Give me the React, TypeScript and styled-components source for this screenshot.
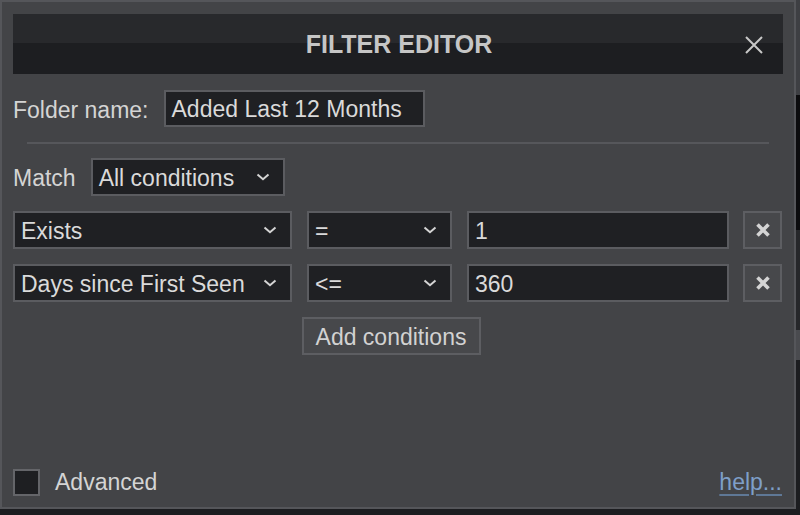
import React from "react";
import styled, { createGlobalStyle } from "styled-components";

const GlobalStyle = createGlobalStyle`
    html, body {
        margin: 0;
        padding: 0;
        width: 800px;
        height: 515px;
        overflow: hidden;
        background: linear-gradient(to bottom,
            #3e3f43 0 95px,
            #0c0c0e 95px 230px,
            #26272a 230px 330px,
            #4a4b4f 330px 360px,
            #1c1d20 360px);
        font-family: "Liberation Sans", Arial, sans-serif;
    }
`;

const Dialog = styled.div`
    box-sizing: border-box;
    width: 796px;
    height: 509px;
    background: #434447;
    border: 2px solid #55565a;
    padding: 12px 11px 11px 11px;
    display: flex;
    flex-direction: column;
    color: #d4d4d4;
    font-size: 23px;
`;

const Header = styled.div`
    height: 60px;
    flex: none;
    display: flex;
    align-items: center;
    justify-content: center;
    position: relative;
    background: linear-gradient(to bottom, #28292c 0 48%, #1d1e21 48% 100%);
`;

const Title = styled.h1`
    margin: 0 0 0 2px;
    font-size: 25px;
    font-weight: bold;
    color: #c6c6c6;
`;

const CloseButton = styled.button`
    position: absolute;
    right: 18px;
    top: 20px;
    width: 22px;
    height: 22px;
    padding: 0;
    border: none;
    background: transparent;
    display: flex;
    align-items: center;
    justify-content: center;
`;

const Row = styled.div<{ $top: number }>`
    display: flex;
    align-items: center;
    margin-top: ${(p) => p.$top}px;
    gap: 15px;
    flex: none;
`;

const Label = styled.span`
    color: #d4d4d4;
    font-size: 23px;
    padding-top: 3px;
    white-space: nowrap;
`;

const TextField = styled.div<{ $width: number; $height?: number }>`
    box-sizing: border-box;
    width: ${(p) => p.$width}px;
    height: ${(p) => p.$height ?? 38}px;
    background: #1f2023;
    border: 2px solid #5b5c60;
    padding: 2px 6px 0 6px;
    display: flex;
    align-items: center;
    color: #dadada;
    font-size: 23px;
    white-space: nowrap;
`;

const Select = styled(TextField)`
    justify-content: space-between;
    padding-right: 13px;
`;

const Divider = styled.hr`
    margin: 15px 14px 0 14px;
    border: none;
    height: 2px;
    background: #56575b;
    flex: none;
`;

const ConditionRow = styled.div`
    display: flex;
    align-items: center;
    margin-top: 15px;
    flex: none;
`;

const DeleteButton = styled.button`
    box-sizing: border-box;
    width: 39px;
    height: 38px;
    margin-left: 14px;
    background: #47484b;
    border: 2px solid #5d5e62;
    padding: 0;
    display: flex;
    align-items: center;
    justify-content: center;
`;

const AddRow = styled.div`
    display: flex;
    justify-content: center;
    margin-top: 15px;
    flex: none;
`;

const AddButton = styled.button`
    box-sizing: border-box;
    width: 179px;
    height: 38px;
    margin-left: -14px;
    background: #47484b;
    border: 2px solid #5d5e62;
    color: #d2d2d2;
    font-family: "Liberation Sans", Arial, sans-serif;
    font-size: 23px;
    padding: 2px 0 0 0;
`;

const Footer = styled.div`
    margin-top: auto;
    display: flex;
    align-items: center;
    justify-content: space-between;
    padding-right: 1px;
`;

const CheckLabel = styled.label`
    display: flex;
    align-items: center;
    gap: 15px;
    font-size: 23px;
    color: #d4d4d4;
`;

const CheckBox = styled.span`
    box-sizing: border-box;
    width: 27px;
    height: 27px;
    background: #1e1f22;
    border: 2px solid #646569;
    display: inline-block;
`;

const HelpLink = styled.a`
    color: #7e9fc8;
    font-size: 23px;
    text-decoration: underline;
    text-decoration-color: #5f7896;
    text-underline-offset: 4px;
`;

const Chevron = () => (
    <svg width="14" height="8" viewBox="0 0 14 8" style={{ marginTop: -2 }}>
        <path d="M1.5 1.5 L7 6.2 L12.5 1.5" fill="none" stroke="#d4d4d4" strokeWidth="2" />
    </svg>
);

const conditions = [
    { field: "Exists", op: "=", value: "1" },
    { field: "Days since First Seen", op: "<=", value: "360" },
];

export default function App() {
    return (
        <>
            <GlobalStyle />
            <Dialog>
                <Header>
                    <Title>FILTER EDITOR</Title>
                    <CloseButton aria-label="close">
                        <svg width="20" height="20" viewBox="0 0 20 20">
                            <path d="M2 2 L18 18 M18 2 L2 18" stroke="#c8c8c8" strokeWidth="2" />
                        </svg>
                    </CloseButton>
                </Header>

                <Row $top={16}>
                    <Label>Folder name:</Label>
                    <TextField $width={261} $height={37}>Added Last 12 Months</TextField>
                </Row>

                <Divider />

                <Row $top={14}>
                    <Label>Match</Label>
                    <Select $width={194}>
                        <span>All conditions</span>
                        <Chevron />
                    </Select>
                </Row>

                {conditions.map((c) => (
                    <ConditionRow key={c.field}>
                        <Select $width={279}>
                            <span>{c.field}</span>
                            <Chevron />
                        </Select>
                        <Select $width={145} style={{ marginLeft: 15 }}>
                            <span>{c.op}</span>
                            <Chevron />
                        </Select>
                        <TextField $width={262} style={{ marginLeft: 15 }}>{c.value}</TextField>
                        <DeleteButton aria-label="remove">
                            <svg width="16" height="16" viewBox="0 0 16 16">
                                <path d="M2.5 2.5 L13.5 13.5 M13.5 2.5 L2.5 13.5" stroke="#d4d4d4" strokeWidth="3.6" />
                            </svg>
                        </DeleteButton>
                    </ConditionRow>
                ))}

                <AddRow>
                    <AddButton>Add conditions</AddButton>
                </AddRow>

                <Footer>
                    <CheckLabel>
                        <CheckBox />
                        Advanced
                    </CheckLabel>
                    <HelpLink href="#">help...</HelpLink>
                </Footer>
            </Dialog>
        </>
    );
}
